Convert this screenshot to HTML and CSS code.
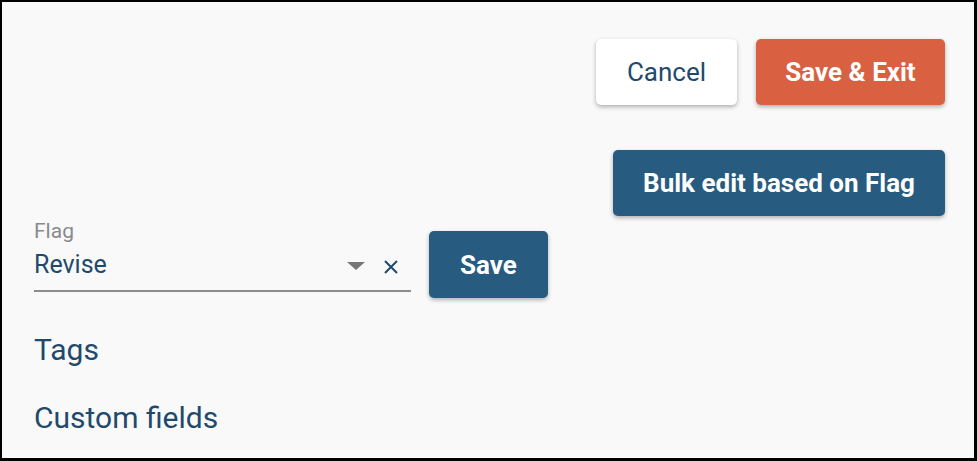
FILE: index.html
```html
<!DOCTYPE html>
<html>
  <head>
    <title>Edit flag</title>
    <link rel="stylesheet" href="styles.css">
  </head>
  <body>
    <div class="frame">
      <div class="top-actions">
        <button class="btn btn-light">Cancel</button>
        <button class="btn btn-orange">Save &amp; Exit</button>
      </div>
      <div class="bulk-row">
        <button class="btn btn-blue">Bulk edit based on Flag</button>
      </div>

      <!-- Flag select -->
      <div class="flag-row">
        <div class="field">
          <label class="field-label">Flag</label>
          <div class="field-input">
            <span class="field-value">Revise</span>
            <svg class="caret" width="18" height="8" viewBox="0 0 18 8"><path d="M0 0h18L9 8z" fill="#767676"/></svg>
            <svg class="clear" width="14" height="14" viewBox="0 0 14 14"><path d="M1 1l12 12M13 1L1 13" stroke="#1f4a6b" stroke-width="2"/></svg>
          </div>
        </div>
        <button class="btn btn-blue btn-save">Save</button>
      </div>

      <div class="section">Tags</div>
      <div class="section">Custom fields</div>
    </div>
  </body>
</html>
```

FILE: styles.css
```css
html, body {
  margin: 0;
  padding: 0;
}
body {
  font-family: Roboto, "Liberation Sans", sans-serif;
  background-color: #000;
}
.frame {
  box-sizing: border-box;
  width: 977px;
  height: 461px;
  border-style: solid;
  border-color: #000;
  border-width: 2px 3px 3px 2px;
  background-color: #f9f9f9;
  padding: 0 29px 0 32px;
  overflow: hidden;
}
.top-actions {
  display: flex;
  justify-content: flex-end;
  gap: 19px;
  margin-top: 37px;
}
.btn {
  font-family: Roboto, "Liberation Sans", sans-serif;
  height: 66px;
  border: none;
  border-radius: 5px;
  font-size: 26px;
  cursor: pointer;
  box-shadow: 0 2px 4px rgba(0, 0, 0, 0.3);
}
.btn-light {
  width: 141px;
  background-color: #fff;
  color: #1f4a6b;
  font-weight: 400;
}
.btn-orange {
  width: 189px;
  background-color: #d96142;
  color: #fff;
  font-weight: 700;
}
.btn-blue {
  background-color: #275b80;
  color: #fff;
  font-weight: 700;
}
.bulk-row {
  display: flex;
  justify-content: flex-end;
  margin-top: 45px;
}
.bulk-row .btn {
  width: 332px;
}
.flag-row {
  display: flex;
  align-items: flex-start;
  gap: 18px;
  margin-top: 3px;
}
.field {
  width: 377px;
}
.field-label {
  display: block;
  color: #8a8a8a;
  font-size: 21px;
  line-height: 24px;
}
.field-input {
  display: flex;
  align-items: center;
  height: 47px;
  border-bottom: 2px solid #8c8c8c;
}
.field-value {
  flex: 1;
  align-self: flex-start;
  padding-top: 7px;
  color: #1f4a6b;
  font-size: 25px;
  line-height: 30px;
}
.caret {
  margin-right: 19px;
  margin-top: -2px;
}
.clear {
  margin-right: 13px;
}
.btn-save {
  width: 119px;
  height: 67px;
  margin-top: 12px;
}
.section {
  color: #1f4a6b;
  font-size: 30px;
  line-height: 34px;
  margin-top: 35px;
}
.section + .section {
  margin-top: 34px;
}
```
